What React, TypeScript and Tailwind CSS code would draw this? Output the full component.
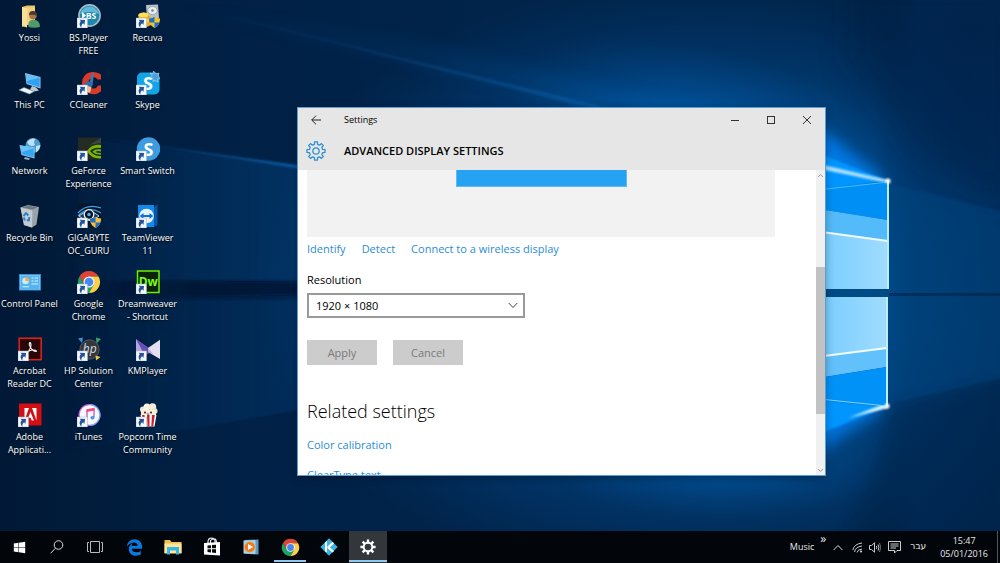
import type { ReactNode } from "react";
import { FaEdgeLegacy, FaWindows } from "react-icons/fa";

/** Outline of a gear with evenly spaced trapezoid teeth, centred on 12,12. */
function gearPath(teeth: number, outer: number, inner: number): string {
  const step = (Math.PI * 2) / teeth;
  const points: string[] = [];
  for (let i = 0; i < teeth; i++) {
    const mid = i * step;
    const corners: [number, number][] = [
      [mid - step * 0.29, inner],
      [mid - step * 0.2, outer],
      [mid + step * 0.2, outer],
      [mid + step * 0.29, inner],
    ];
    for (const [angle, radius] of corners) {
      points.push(
        `${(12 + radius * Math.sin(angle)).toFixed(2)} ${(12 - radius * Math.cos(angle)).toFixed(2)}`
      );
    }
  }
  return `M${points.join("L")}Z`;
}

function Wallpaper() {
  return (
    <svg
      className="absolute inset-0 h-full w-full"
      viewBox="0 0 1000 531"
      preserveAspectRatio="none"
      aria-hidden="true"
    >
      <defs>
        <linearGradient id="base" x1="0" y1="0" x2="1" y2="0">
          <stop offset="0" stopColor="#011936" />
          <stop offset="0.25" stopColor="#012146" />
          <stop offset="0.5" stopColor="#01244b" />
          <stop offset="0.8" stopColor="#012348" />
          <stop offset="1" stopColor="#012144" />
        </linearGradient>
        <radialGradient id="halo" gradientUnits="userSpaceOnUse" cx="0" cy="0" r="1" gradientTransform="translate(720 285) scale(470 310)">
          <stop offset="0" stopColor="#0078d8" stopOpacity="0.9" />
          <stop offset="0.5" stopColor="#0062b4" stopOpacity="0.55" />
          <stop offset="0.8" stopColor="#00529c" stopOpacity="0.24" />
          <stop offset="1" stopColor="#004a8c" stopOpacity="0" />
        </radialGradient>
        <radialGradient id="topGlow" gradientUnits="userSpaceOnUse" cx="0" cy="0" r="1" gradientTransform="translate(700 120) rotate(12) scale(190 75)">
          <stop offset="0" stopColor="#0066c0" stopOpacity="0.5" />
          <stop offset="1" stopColor="#0058a6" stopOpacity="0" />
        </radialGradient>
        <radialGradient id="bottomGlow" gradientUnits="userSpaceOnUse" cx="0" cy="0" r="1" gradientTransform="translate(725 470) scale(170 50)">
          <stop offset="0" stopColor="#006cca" stopOpacity="0.4" />
          <stop offset="1" stopColor="#0058a6" stopOpacity="0" />
        </radialGradient>
        <linearGradient id="shade" x1="0" y1="0" x2="1" y2="0">
          <stop offset="0" stopColor="#00284f" stopOpacity="0" />
          <stop offset="0.3" stopColor="#003061" stopOpacity="0.6" />
          <stop offset="1" stopColor="#012a55" stopOpacity="0.7" />
        </linearGradient>
        <linearGradient id="beam" x1="0" y1="0" x2="1" y2="0">
          <stop offset="0" stopColor="#0a66b8" stopOpacity="0" />
          <stop offset="1" stopColor="#0a72cc" stopOpacity="0.5" />
        </linearGradient>
        <linearGradient id="ray" x1="0" y1="0" x2="1" y2="0">
          <stop offset="0" stopColor="#1379d6" stopOpacity="0" />
          <stop offset="1" stopColor="#1684e6" stopOpacity="0.8" />
        </linearGradient>
        <linearGradient id="leftPane" x1="0" y1="0" x2="1" y2="0">
          <stop offset="0" stopColor="#00437f" stopOpacity="0" />
          <stop offset="1" stopColor="#00437f" stopOpacity="0.5" />
        </linearGradient>
        <linearGradient id="band" x1="0" y1="0" x2="1" y2="0">
          <stop offset="0" stopColor="#00152f" stopOpacity="0" />
          <stop offset="0.5" stopColor="#00152f" stopOpacity="0.65" />
          <stop offset="1" stopColor="#00152f" stopOpacity="0.65" />
        </linearGradient>
        <linearGradient id="pane" x1="0" y1="0" x2="1" y2="0">
          <stop offset="0" stopColor="#6cc8ff" />
          <stop offset="1" stopColor="#a0dcff" />
        </linearGradient>
        <filter id="soft" x="-30%" y="-50%" width="160%" height="200%">
          <feGaussianBlur stdDeviation="16" />
        </filter>
        <filter id="mid" x="-30%" y="-30%" width="160%" height="160%">
          <feGaussianBlur stdDeviation="7" />
        </filter>
        <filter id="fine" x="-30%" y="-30%" width="160%" height="160%">
          <feGaussianBlur stdDeviation="1.2" />
        </filter>
      </defs>
      <rect width="1000" height="531" fill="url(#base)" />
      <rect width="1000" height="531" fill="url(#halo)" />
      <rect width="1000" height="531" fill="url(#topGlow)" />
      <rect width="1000" height="531" fill="url(#bottomGlow)" />
      <path d="M140 0L600 112L720 112L420 40Z" fill="url(#beam)" opacity="0.35" filter="url(#mid)" />
      <path d="M180 4L600 107L590 107Z" stroke="url(#ray)" strokeWidth="2" opacity="0.45" filter="url(#fine)" />
      <path d="M60 135L310 169V280H60Z" fill="url(#leftPane)" filter="url(#fine)" />
      <path d="M60 132L310 167L310 170Z" fill="url(#ray)" opacity="0.8" filter="url(#fine)" />
      <path d="M90 281L310 282V295L90 297Z" fill="url(#band)" filter="url(#fine)" />
      <path d="M60 300H310V408L60 452Z" fill="url(#leftPane)" opacity="0.7" filter="url(#fine)" />
      <rect x="875" y="-10" width="140" height="560" fill="url(#shade)" />
      <path d="M850 -10H1010V200L920 160L850 60Z" fill="#001f42" opacity="0.4" filter="url(#soft)" />
      <path d="M888 183L1005 212V378L888 404Z" fill="#004885" opacity="0.4" filter="url(#fine)" />
      <path d="M888 293H1010V296H888Z" fill="#002346" opacity="0.6" />
      <path d="M893 406L1010 378V560H840Z" fill="#001d3e" opacity="0.3" filter="url(#mid)" />

      <path d="M800 112L886 180L800 205Z" fill="#0086ff" opacity="0.75" filter="url(#mid)" />
      <path d="M810 150L888 181L810 192Z" fill="#0095ff" filter="url(#fine)" />
      <path d="M815 163L888 180L888 183L815 168Z" fill="#d9f3ff" opacity="0.8" filter="url(#fine)" />
      <path d="M800 192L888 182V220L800 206Z" fill="#0090f5" />
      <path d="M800 206L888 220V241L800 229Z" fill="#54bbfb" />
      <path d="M800 229L888 241V289H800Z" fill="url(#pane)" />
      <path d="M800 192L888 182" stroke="#47bdff" />
      <path d="M800 229L888 241" stroke="#f2fbff" strokeWidth="2" />
      <path d="M888 181V289" stroke="#b9efff" strokeWidth="2" />

      <path d="M800 465L886 408L800 395Z" fill="#0080f4" opacity="0.75" filter="url(#mid)" />
      <path d="M800 397L888 406L800 442Z" fill="#0095ff" filter="url(#fine)" />
      <path d="M848 418L884 404L888 408Z" fill="#d9f3ff" filter="url(#fine)" />
      <path d="M800 297H887V348L800 359Z" fill="url(#pane)" />
      <path d="M800 359L887 348V367L800 381Z" fill="#62c1fb" />
      <path d="M800 381L887 367V406L800 397Z" fill="#0092f7" />
      <path d="M800 359L887 348" stroke="#f2fbff" strokeWidth="2" />
      <path d="M800 397L887 406" stroke="#7ed2ff" />
      <path d="M887 297V406" stroke="#b9efff" strokeWidth="2" />
      <path d="M800 289H889V297H800Z" fill="#004a86" />
      <circle cx="888" cy="181" r="2.500" fill="#fff" filter="url(#fine)" />
      <circle cx="887" cy="406" r="2.500" fill="#fff" filter="url(#fine)" />
    </svg>
  );
}

function Glyph({ children, shortcut = false }: { children: ReactNode; shortcut?: boolean }) {
  return (
    <svg className="h-6 w-6 shrink-0" viewBox="0 0 24 24" aria-hidden="true">
      {children}
      {shortcut && (
        <g>
          <rect x="0" y="14" width="10.5" height="10" fill="#f4f7fb" stroke="#9fb0c2" strokeWidth="0.5" />
          <path d="M1.800 22.500C1.300 19 3 17.200 5 17V15L9.300 18.200L5.800 22V20C4 20 2.800 20.800 1.800 22.500Z" fill="#24539c" transform="rotate(-35 5 19)" />
        </g>
      )}
    </svg>
  );
}

function ShieldMark() {
  return (
    <g>
      <path d="M13 14.500Q16.500 14.500 18.500 12.800Q20.500 14.500 24 14.500Q24.300 21 18.500 24Q12.800 21 13 14.500Z" fill="#f6c12f" />
      <path d="M13 14.500Q16.500 14.500 18.500 12.800V18.500H13.400ZM18.500 18.500H23.500Q22.500 22 18.500 24Z" fill="#1f6fc9" />
    </g>
  );
}

function ChromeMark() {
  return (
    <g>
      <path d="M2.470 6.500A11 11 0 0 1 21.530 6.500H12V12L7.240 14.750Z" fill="#dc4437" />
      <path d="M2.470 6.500L7.240 14.750L12 12L16.760 14.750L12 23A11 11 0 0 1 2.470 6.500Z" fill="#1ea362" />
      <path d="M21.530 6.500A11 11 0 0 1 12 23L16.760 14.750L12 12V6.500Z" fill="#ffcf45" />
      <circle cx="12" cy="12" r="5.500" fill="#f4f4f4" />
      <circle cx="12" cy="12" r="4.300" fill="#4688f1" />
    </g>
  );
}

const letter = "font-['Open_Sans',sans-serif] font-bold";

type DesktopItem = { name: string; lines: string[]; shortcut?: boolean; art: ReactNode };

const desktopItems: DesktopItem[] = [
  {
    name: "Yossi",
    lines: ["Yossi"],
    art: (
      <g>
        <path d="M4 3L9 1.500H17V21H8L4 23Z" fill="#e9c368" />
        <path d="M4 3L9 4.500V23.500L4 22Z" fill="#f9e09a" />
        <path d="M9 3.500H17V21H9Z" fill="#f3d07c" />
        <path d="M10.500 23Q9.500 16 15.500 15.500Q22 16 22 23Q16 24.500 10.500 23Z" fill="#4e9a6a" />
        <circle cx="15" cy="11.500" r="3.800" fill="#a9744c" />
        <path d="M11 11Q11 6.500 15.500 7Q19.500 7.500 18.800 12Q16 10 11 11Z" fill="#4d3a2c" />
      </g>
    ),
  },
  {
    name: "This PC",
    lines: ["This PC"],
    art: (
      <g>
        <path d="M7 2L22.500 6V17.500L8.500 13Z" fill="#9fc9e8" />
        <path d="M8 3.200L21.700 6.800V16.300L9.200 12.200Z" fill="#2da2f2" />
        <path d="M8 3.200L21.700 6.800L9 10Z" fill="#63c0fb" />
        <path d="M14 15L18 16.500L21 19.500L16 20.500L12 18.500Z" fill="#b9c7d3" />
        <path d="M1 19L6 16.500L16 20.500L11.500 23Z" fill="#eef3f7" stroke="#8d9aa8" strokeWidth="0.5" />
      </g>
    ),
  },
  {
    name: "Network",
    lines: ["Network"],
    art: (
      <g>
        <circle cx="15" cy="8.500" r="7.500" fill="#4b9bd0" />
        <path d="M9 5Q13 0 17.500 2Q15 5 17 8Q12 11 9 5ZM18 9L22.300 8Q22 13 18 15.500Z" fill="#bfe3f5" />
        <path d="M1.500 8L16.500 10.500V21.500L3.500 18Z" fill="#8cd0f7" />
        <path d="M2.500 9L15.700 11.300V20.400L4.100 17.200Z" fill="#35a6ef" />
        <path d="M2.500 9L15.700 11.300L4 15Z" fill="#6cc5fb" />
        <path d="M7 20L12 21.500L11 23L6 22Z" fill="#9ab4c6" />
      </g>
    ),
  },
  {
    name: "Recycle Bin",
    lines: ["Recycle Bin"],
    art: (
      <g>
        <path d="M2.500 3.500L10 1L21 3L18.500 20.500L14 23.500L6 21Z" fill="#98a2aa" />
        <path d="M2.500 3.500L14.500 6.500L14 23.500L6 21Z" fill="#c3cad0" />
        <path d="M4 3.600L10 1.800L19.500 3.300L14.500 5.600Z" fill="#6b767f" />
        <g fill="none" stroke="#2482cf" strokeWidth="1.900">
          <path d="M5.500 12L8 9.200L10.300 11.500" />
          <path d="M11.200 13L11 16.200H8.800" />
          <path d="M5.800 13.500L6.800 16.500" />
        </g>
      </g>
    ),
  },
  {
    name: "Control Panel",
    lines: ["Control Panel"],
    art: (
      <g>
        <rect x="1.500" y="4.500" width="21" height="15.500" fill="#8ed5fa" stroke="#2f8fd0" />
        <rect x="2.500" y="5.500" width="19" height="13.500" fill="#54b4ee" />
        <circle cx="7.500" cy="11" r="3.300" fill="#c9eaff" />
        <path d="M7.500 11V7A4 4 0 0 1 11.500 11Z" fill="#f2a93b" />
        <path d="M13.500 8H15.500M16.500 8H20M13.500 11H15.500M16.500 11H20M13.500 14H20M4.500 16.800H11" stroke="#d6efff" strokeWidth="1.100" />
      </g>
    ),
  },
  {
    name: "Acrobat Reader DC",
    lines: ["Acrobat", "Reader DC"],
    shortcut: true,
    art: (
      <g>
        <rect x="1.200" y="1.200" width="22" height="21.500" fill="#2a0707" stroke="#e2231a" strokeWidth="1.500" />
        <path d="M12 5.500C14.500 8 12 13 8.500 16.500C7 18 7.500 16 10 14.500C13 12.800 17.500 12.500 18.500 14C17 15.500 13 12.500 11.500 8.500C11 7 11.300 5.500 12 5.500Z" fill="none" stroke="#f1eeee" strokeWidth="1.100" />
      </g>
    ),
  },
  {
    name: "Adobe Application Manager",
    lines: ["Adobe", "Applicati..."],
    shortcut: true,
    art: (
      <g>
        <rect x="1" y="0.500" width="22.500" height="22" fill="#d40f13" />
        <path d="M14 5H18.500V17.500Z" fill="#fff" />
        <path d="M11 5H6.500V17.500Z" fill="#fff" />
        <path d="M12.500 9L16 17.500H13.700L12.600 14.800H10.200Z" fill="#fff" />
      </g>
    ),
  },
  {
    name: "BS.Player FREE",
    lines: ["BS.Player", "FREE"],
    shortcut: true,
    art: (
      <g>
        <circle cx="12.500" cy="11.500" r="11.400" fill="#a9bcc6" />
        <circle cx="12.500" cy="11.500" r="9.800" fill="#1d87ae" />
        <path d="M3 10A9.800 9.800 0 0 1 22 10Q12 6 3 10Z" fill="#5fb8d8" />
        <path d="M5 8L9 11.500L5 15Z" fill="#fff" />
        <text x="14" y="15" fontSize="8.500" textAnchor="middle" fill="#fff" className={letter}>BS</text>
      </g>
    ),
  },
  {
    name: "CCleaner",
    lines: ["CCleaner"],
    shortcut: true,
    art: (
      <g>
        <path d="M24 3.500V8.500H20.500Q18.500 5.500 15.500 6.500Q11 8 11.500 13Q12.500 18 17 17.500Q20 17 21 14.500H24.500V20Q20 24 14.500 23Q5.500 21 5 12Q5.500 2 15 1Q20 0.500 24 3.500Z" fill="#d83a2c" />
        <path d="M14.500 3.500L17 2L15.800 12L12.500 11.500Z" fill="#3b78b8" />
        <path d="M9 11Q13 9.500 16.500 13L14.500 16L7 14Z" fill="#2f6cb0" />
        <path d="M7 14L14.500 16L13 22L8 20Z" fill="#f0c58a" />
      </g>
    ),
  },
  {
    name: "GeForce Experience",
    lines: ["GeForce", "Experience"],
    shortcut: true,
    art: (
      <g>
        <rect x="1" y="0.500" width="23" height="22" fill="#252b23" />
        <path d="M24 1L12 8L24 6Z" fill="#3d443a" />
        <path d="M24 8Q15 6.500 10 14Q14 22 24 21.500V19Q17 19.500 13 14Q17 9.800 24 11Z" fill="#76b900" />
        <path d="M24 12.500Q18 11.500 15.500 14.500Q18 18 24 17.500V16Q20 16.500 18.500 14.700Q20.500 13.500 24 14.500Z" fill="#76b900" />
      </g>
    ),
  },
  {
    name: "GIGABYTE OC_GURU",
    lines: ["GIGABYTE", "OC_GURU"],
    shortcut: true,
    art: (
      <g>
        <rect x="0.500" y="0" width="24" height="24" rx="1.500" fill="#08182c" />
        <path d="M1 9Q10 -1 24 4M1 12Q11 1 24 9" stroke="#3f9fe6" strokeWidth="1.200" fill="none" />
        <path d="M2 12Q12 3 22 12Q12 21 2 12Z" fill="#0d3563" stroke="#d9ecf7" strokeWidth="0.900" />
        <circle cx="12" cy="10.500" r="4.800" fill="#061223" stroke="#eaf5fb" strokeWidth="1.300" />
        <circle cx="12" cy="10.500" r="1.800" fill="#49b2f2" />
        <ShieldMark />
      </g>
    ),
  },
  {
    name: "Google Chrome",
    lines: ["Google", "Chrome"],
    shortcut: true,
    art: <ChromeMark />,
  },
  {
    name: "HP Solution Center",
    lines: ["HP Solution", "Center"],
    shortcut: true,
    art: (
      <g>
        <circle cx="12.500" cy="12.500" r="9.700" fill="#34383c" stroke="#70777c" strokeWidth="0.600" />
        <path d="M1 1.500L6 0.500L5 6Z" fill="#3f8fd2" />
        <path d="M24 2L19 0.500L19.500 6.500Z" fill="#35a665" />
        <path d="M19 23.500L23.500 20L18.500 18.500Z" fill="#e9c63c" />
        <text x="12.800" y="15.500" fontSize="12" fontStyle="italic" textAnchor="middle" fill="#d9dde0" className="font-['Open_Sans',sans-serif] font-medium">hp</text>
      </g>
    ),
  },
  {
    name: "iTunes",
    lines: ["iTunes"],
    shortcut: true,
    art: (
      <g>
        <circle cx="12.500" cy="12" r="11" fill="#c86be0" />
        <path d="M12.500 1A11 11 0 0 1 12.500 23Z" fill="#6ea9f2" />
        <circle cx="12.500" cy="12" r="9.800" fill="#fbf8fd" />
        <path d="M10 7.500V15.500M17 6V14" stroke="#b45ad6" strokeWidth="1.300" />
        <path d="M9.400 6.300L17.600 4.800V7.500L9.400 9Z" fill="#f2487a" />
        <ellipse cx="8.500" cy="16" rx="2.100" ry="1.800" fill="#5b7fee" />
        <ellipse cx="15.500" cy="14.800" rx="2.100" ry="1.800" fill="#4d8ff0" />
      </g>
    ),
  },
  {
    name: "Recuva",
    lines: ["Recuva"],
    shortcut: true,
    art: (
      <g>
        <path d="M10 1L22 0.500L23 14L11 15Z" fill="#b9c1c6" />
        <ellipse cx="16.500" cy="6.500" rx="4.800" ry="4" fill="#e8edef" stroke="#8e999f" strokeWidth="0.800" />
        <circle cx="16.500" cy="6.500" r="1.300" fill="#76828a" />
        <path d="M2 11Q7 6 12 10L15 14V21Q9 25 4 21Z" fill="#e5ae1e" />
        <ellipse cx="7.500" cy="11" rx="5" ry="2.300" fill="#ffdf5a" />
        <ellipse cx="11" cy="16.500" rx="4.500" ry="2" fill="#fbd03c" />
        <ShieldMark />
      </g>
    ),
  },
  {
    name: "Skype",
    lines: ["Skype"],
    shortcut: true,
    art: (
      <g>
        <rect x="1" y="1.500" width="22.500" height="22" rx="5" fill="#12a5e6" />
        <text x="12" y="19" fontSize="18" textAnchor="middle" fill="#fff" className={letter}>S</text>
        <path d="M14 2L17 3L17.500 0L20 3L23 2L22 5L24 7.500L21.500 8.500L22 11L19 9.500L17 10.500L17 7.500L14 6.500L16 4.500Z" fill="#4d9edb" stroke="#b5dcf5" strokeWidth="0.600" />
      </g>
    ),
  },
  {
    name: "Smart Switch",
    lines: ["Smart Switch"],
    shortcut: true,
    art: (
      <g>
        <circle cx="12.500" cy="12" r="11.700" fill="#3d9be0" />
        <text x="12.500" y="18.500" fontSize="18" textAnchor="middle" fill="#fff" className={letter}>S</text>
      </g>
    ),
  },
  {
    name: "TeamViewer 11",
    lines: ["TeamViewer", "11"],
    shortcut: true,
    art: (
      <g>
        <path d="M2 1H18V23H2Z" fill="#1489e8" />
        <path d="M18 3L21.500 0.500V21L18 23Z" fill="#0757a8" />
        <circle cx="10.500" cy="12" r="7.300" fill="#e9f3fb" />
        <path d="M3.700 12L7.500 9V11H13.500V9L17.300 12L13.500 15V13H7.500V15Z" fill="#0e6fd0" />
      </g>
    ),
  },
  {
    name: "Dreamweaver - Shortcut",
    lines: ["Dreamweaver", "- Shortcut"],
    shortcut: true,
    art: (
      <g>
        <rect x="1.500" y="1" width="21.500" height="21.500" fill="#0a2408" stroke="#6df000" strokeWidth="1.500" />
        <text x="12.300" y="16" fontSize="12" textAnchor="middle" fill="#7dfb1a" className={letter}>Dw</text>
      </g>
    ),
  },
  {
    name: "KMPlayer",
    lines: ["KMPlayer"],
    shortcut: true,
    art: (
      <g>
        <path d="M0 2L13 12V14L0 22Z" fill="#b3a6e2" />
        <path d="M0 2L13 11V16L9 19Z" fill="#6750b4" />
        <path d="M25 2L12 11V15L25 22.500Z" fill="#e4dff2" />
        <path d="M12 11V15L18 18Z" fill="#b9aee0" />
      </g>
    ),
  },
  {
    name: "Popcorn Time Community",
    lines: ["Popcorn Time", "Community"],
    shortcut: true,
    art: (
      <g>
        <circle cx="7" cy="6.500" r="3" fill="#f3e9d2" />
        <circle cx="11" cy="4" r="3.500" fill="#fbf5e6" />
        <circle cx="16.500" cy="4" r="3.700" fill="#f6eddb" />
        <circle cx="18.500" cy="8" r="3" fill="#efe3c8" />
        <path d="M5 7H20V13H5Z" fill="#f8efdd" />
        <circle cx="9" cy="9.500" r="1" fill="#222" />
        <circle cx="15" cy="9.500" r="1" fill="#222" />
        <path d="M10.500 10.500H13.500Q12 13 10.500 10.500Z" fill="#d0242e" />
        <path d="M4.500 12H20.500L18.500 23.500H7Z" fill="#fff" />
        <path d="M6 12H8.500L9.500 23.500H7.500ZM11 12H13.500V23.500H11.500ZM16 12H18.800L17.200 23.500H15.300Z" fill="#cf1f2c" />
      </g>
    ),
  },
];

function DesktopIcon({ item }: { item: DesktopItem }) {
  return (
    <button type="button" aria-label={item.name} className="flex flex-col items-center pt-1">
      <Glyph shortcut={item.shortcut}>{item.art}</Glyph>
      <span className="mt-[3px] flex flex-col whitespace-nowrap text-center text-[9px] leading-[13px] text-white [text-shadow:0_1px_2px_#000]">
        {item.lines.map((line) => (
          <span key={line}>{line}</span>
        ))}
      </span>
    </button>
  );
}

function CaptionButton({ label, children }: { label: string; children: ReactNode }) {
  return (
    <button type="button" aria-label={label} className="flex h-6 w-9 items-center justify-center">
      <svg className="h-[10px] w-[10px]" viewBox="0 0 10 10" fill="none" stroke="#333" aria-hidden="true">
        {children}
      </svg>
    </button>
  );
}

function ScrollBar() {
  return (
    <div className="flex w-[9px] shrink-0 flex-col bg-[#f0f0f0]">
      <button type="button" aria-label="Scroll up" className="flex h-[10px] items-center justify-center">
        <svg className="h-[5px] w-[7px]" viewBox="0 0 7 5" fill="none" stroke="#9a9a9a" aria-hidden="true">
          <path d="M1 4L3.500 1.500L6 4" />
        </svg>
      </button>
      <div className="flex grow flex-col">
        <div className="basis-[87px]" />
        <div className="grow-1 basis-[147px] bg-[#c2c2c2]" />
        <div className="basis-[51px]" />
      </div>
      <button type="button" aria-label="Scroll down" className="flex h-[10px] items-center justify-center">
        <svg className="h-[5px] w-[7px]" viewBox="0 0 7 5" fill="none" stroke="#9a9a9a" aria-hidden="true">
          <path d="M1 1L3.500 3.500L6 1" />
        </svg>
      </button>
    </div>
  );
}

function SettingsWindow() {
  return (
    <section
      aria-label="Settings"
      className="absolute top-[107px] right-[174px] bottom-[55px] left-[297px] flex flex-col border border-[#5a9fd4] bg-white text-[11px] leading-4 text-black shadow-[0_2px_8px_rgba(0,0,0,0.3)]"
    >
      <header className="shrink-0 bg-[#e6e6e6]">
        <div className="flex h-6 items-center">
          <button type="button" aria-label="Back" className="flex h-6 w-9 items-center justify-center">
            <svg className="h-[10px] w-[10px]" viewBox="0 0 10 10" fill="none" stroke="#222" aria-hidden="true">
              <path d="M10 5H0.800M5 0.700L0.700 5L5 9.300" />
            </svg>
          </button>
          <span className="ml-[10px] grow text-[9px]">Settings</span>
          <CaptionButton label="Minimize">
            <path d="M1 5.500H9" />
          </CaptionButton>
          <CaptionButton label="Maximize">
            <rect x="1.500" y="1.500" width="7" height="7" />
          </CaptionButton>
          <CaptionButton label="Close">
            <path d="M1 1L9 9M9 1L1 9" />
          </CaptionButton>
        </div>
        <div className="flex h-[38px] items-center">
          <span className="flex w-9 justify-center">
            <svg className="h-5 w-5" viewBox="0 0 24 24" fill="none" stroke="#2b8fd3" strokeWidth="1.500" strokeLinejoin="round" aria-hidden="true">
              <path d={gearPath(8, 11, 8.2)} />
              <circle cx="12" cy="12" r="3.800" />
            </svg>
          </span>
          <h1 className="ml-[10px] font-semibold">ADVANCED DISPLAY SETTINGS</h1>
        </div>
      </header>
      <div className="flex min-h-0 grow">
        <div className="grow overflow-hidden pl-[9px]">
          <div className="mr-[41px] flex h-[67px] justify-center bg-[#f2f2f2]">
            <div className="h-[17px] w-[171px] border border-t-0 border-[#5cbcf8] bg-[#26a2f2]" />
          </div>
          <nav className="mt-1 flex gap-4 text-[#2a8dd4]">
            <a href="#identify">Identify</a>
            <a href="#detect">Detect</a>
            <a href="#wireless">Connect to a wireless display</a>
          </nav>
          <label htmlFor="resolution" className="mt-[15px] block">
            Resolution
          </label>
          <div className="relative mt-[5px] w-[218px]">
            <select
              id="resolution"
              defaultValue="1920"
              className="block h-[25px] w-full appearance-none border-2 border-[#999] bg-white pl-[7px] text-[11px]"
            >
              <option value="1920">1920 × 1080</option>
            </select>
            <svg className="pointer-events-none absolute top-[9px] right-[7px] h-[7px] w-[10px]" viewBox="0 0 10 7" fill="none" stroke="#444" aria-hidden="true">
              <path d="M0.700 1L5 5.500L9.300 1" />
            </svg>
          </div>
          <div className="mt-[22px] flex gap-4 text-[#7a7a7a]">
            <button type="button" disabled className="h-[25px] w-[70px] bg-[#ccc]">Apply</button>
            <button type="button" disabled className="h-[25px] w-[70px] bg-[#ccc]">Cancel</button>
          </div>
          <h2 className="mt-[34px] text-[18px] leading-6 font-light">Related settings</h2>
          <div className="mt-[14px] flex flex-col items-start gap-[14px] text-[#2a8dd4]">
            <a href="#color">Color calibration</a>
            <a href="#cleartype">ClearType text</a>
          </div>
        </div>
        <ScrollBar />
      </div>
    </section>
  );
}

function TaskButton({ label, state = "idle", children }: { label: string; state?: "idle" | "open" | "active"; children: ReactNode }) {
  return (
    <button
      type="button"
      aria-label={label}
      className={
        state === "active"
          ? "relative flex w-[38px] items-center justify-center bg-[#33363a]"
          : "relative flex w-[38px] items-center justify-center"
      }
    >
      {children}
      {state === "open" && <span className="absolute inset-x-[3px] bottom-px h-[2px] bg-[#8cc8f2]" />}
      {state === "active" && <span className="absolute inset-x-0 bottom-px h-[2px] bg-[#8cc8f2]" />}
    </button>
  );
}

function Taskbar() {
  return (
    <footer className="relative flex h-8 shrink-0 items-stretch bg-[#02050a] text-[9px] text-[#e8e8e8]">
      <div className="flex">
        <TaskButton label="Start">
          <FaWindows className="h-[13px] w-[13px] text-white" />
        </TaskButton>
        <TaskButton label="Search">
          <svg className="h-[14px] w-[14px]" viewBox="0 0 14 14" fill="none" stroke="#ddd" aria-hidden="true">
            <circle cx="8.500" cy="5" r="4.300" />
            <path d="M5.500 8.200L0.600 13.300" />
          </svg>
        </TaskButton>
        <TaskButton label="Task View">
          <svg className="h-3 w-4" viewBox="0 0 16 12" fill="none" stroke="#bbb" aria-hidden="true">
            <path d="M3.500 0.500H12.500V11.500H3.500ZM2 1.500H0.500V10.500H2M14 1.500H15.500V10.500H14" />
          </svg>
        </TaskButton>
      </div>
      <div className="ml-px flex gap-px">
        <TaskButton label="Microsoft Edge">
          <FaEdgeLegacy className="h-[17px] w-[17px] text-[#0a7ae0]" />
        </TaskButton>
        <TaskButton label="File Explorer">
          <svg className="h-[18px] w-[18px]" viewBox="0 0 18 18" aria-hidden="true">
            <path d="M0.500 2H6L7.500 4H17.500V15H0.500Z" fill="#f0c24c" />
            <path d="M0.500 5.500H17.500V15.500H0.500Z" fill="#ffe597" />
            <path d="M3 9H15V16.500H12V12.500H6V16.500H3Z" fill="#37b6e9" />
          </svg>
        </TaskButton>
        <TaskButton label="Store">
          <svg className="h-5 w-[18px]" viewBox="0 0 18 20" aria-hidden="true">
            <path d="M5 6V4Q5.500 1 8.500 1Q11.500 1 12 4V6M7.500 6V3.500Q9 1.500 12 2Q13.500 2.500 13.500 6" fill="none" stroke="#eee" strokeWidth="1.100" />
            <path d="M1 6L17 5V18.500L1 17.500Z" fill="#fff" />
            <path d="M4.500 8.500L8 8.200V11.300H4.500ZM9 8.100L13 7.800V11.300H9ZM4.500 12.300H8V15.400L4.500 15.100ZM9 12.300H13V15.900L9 15.500Z" fill="#05070b" />
          </svg>
        </TaskButton>
        <TaskButton label="Media Player">
          <svg className="h-4 w-4" viewBox="0 0 16 16" aria-hidden="true">
            <path d="M1.500 1L15.500 0.500V15.500L1.500 14.800Z" fill="#5b9cc4" />
            <path d="M0.500 1.500L12.500 1V15L0.500 14.500Z" fill="#a8d1e8" />
            <circle cx="6.800" cy="8" r="5.300" fill="#f07a1c" stroke="#f8b57c" strokeWidth="0.500" />
            <path d="M5 5L10.200 8L5 11Z" fill="#fff" />
          </svg>
        </TaskButton>
        <TaskButton label="Google Chrome" state="open">
          <svg className="h-[19px] w-[19px]" viewBox="0 0 24 24" aria-hidden="true">
            <ChromeMark />
          </svg>
        </TaskButton>
        <TaskButton label="Kodi">
          <svg className="h-[18px] w-[18px]" viewBox="0 0 18 18" aria-hidden="true">
            <path d="M9 0.300L17.700 9L9 17.700L0.300 9Z" fill="#3ab4e0" />
            <path d="M5 4.500L7 3V14.500L5 13.200ZM7 9L12.500 3.800L14 5.300L8.500 10.800ZM9.300 9L14 13L12.500 14.500L7.500 10.200Z" fill="#fff" />
          </svg>
        </TaskButton>
        <TaskButton label="Settings" state="active">
          <svg className="h-4 w-4" viewBox="0 0 24 24" aria-hidden="true">
            <path d={`${gearPath(8, 11.5, 8)}M12 7A5 5 0 1 0 12 17A5 5 0 1 0 12 7Z`} fill="#fff" fillRule="evenodd" />
          </svg>
        </TaskButton>
      </div>
      <div className="ml-auto flex items-center">
        <span className="text-[9px]">Music</span>
        <button type="button" aria-label="More toolbar items" className="mb-4 ml-[6px] text-[12px] leading-3">»</button>
        <button type="button" aria-label="Show hidden icons" className="ml-[7px]">
          <svg className="h-[7px] w-[10px]" viewBox="0 0 10 7" fill="none" stroke="#ddd" aria-hidden="true">
            <path d="M0.600 6L5 1.500L9.400 6" />
          </svg>
        </button>
        <button type="button" aria-label="Network" className="ml-[9px]">
          <svg className="h-[11px] w-[11px]" viewBox="0 0 11 11" fill="none" stroke="#ccc" aria-hidden="true">
            <path d="M0.800 8Q2 2 10 1M2.600 10Q3 5 10 4M5 10.500Q5.500 7.500 10 7" />
            <circle cx="9" cy="9.500" r="1" fill="#eee" stroke="none" />
          </svg>
        </button>
        <button type="button" aria-label="Volume" className="ml-[6px]">
          <svg className="h-[11px] w-3" viewBox="0 0 12 11" fill="none" stroke="#ccc" aria-hidden="true">
            <path d="M0.500 3.500H2.500L5.500 0.800V10.200L2.500 7.500H0.500Z" />
            <path d="M7.300 4Q8.200 5.500 7.300 7M9 2.500Q10.800 5.500 9 8.500" />
            <path d="M10.500 1Q12.800 5.500 10.500 10" stroke="#777" />
          </svg>
        </button>
        <button type="button" aria-label="Notifications" className="ml-[7px]">
          <svg className="h-[13px] w-[13px]" viewBox="0 0 13 13" fill="none" stroke="#ccc" aria-hidden="true">
            <path d="M0.500 0.500H12.500V9.500H9L6.500 12V9.500H0.500ZM2.500 3H10.500M2.500 5H10.500M2.500 7H8" />
          </svg>
        </button>
        <button type="button" lang="he" aria-label="Input language" className="ml-[9px] font-['DejaVu_Sans',sans-serif]">עבר</button>
        <time dateTime="2016-01-05T15:47" className="mr-3 ml-[14px] flex flex-col text-center leading-[13px]">
          <span>15:47</span>
          <span>05/01/2016</span>
        </time>
      </div>
      <button type="button" aria-label="Show desktop" className="absolute inset-y-0 right-0 w-[3px] border-l border-[#555]" />
    </footer>
  );
}

export default function App() {
  return (
    <div className="flex min-h-screen flex-col overflow-hidden bg-[#01234a] font-['Open_Sans','Noto_Sans',sans-serif]">
      <main className="relative flex grow flex-col items-start">
        <Wallpaper />
        <div className="relative grid h-[466px] auto-cols-[59px] grid-flow-col grid-rows-7">
          {desktopItems.map((item) => (
            <DesktopIcon key={item.name} item={item} />
          ))}
        </div>
        <SettingsWindow />
      </main>
      <Taskbar />
    </div>
  );
}
